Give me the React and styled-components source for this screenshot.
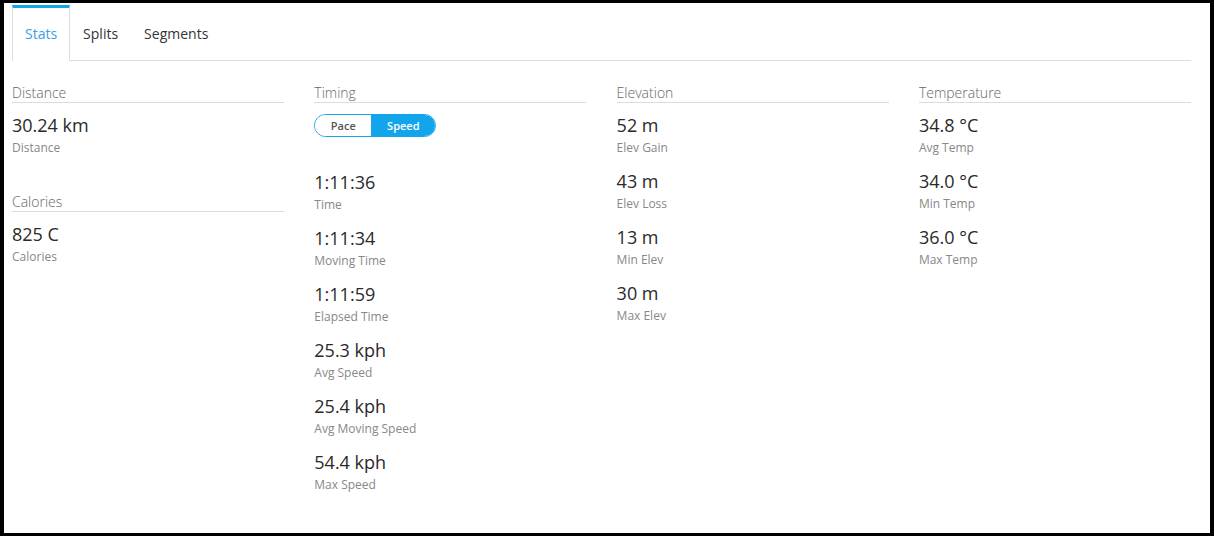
import React, { useState } from 'react'
import styled, { createGlobalStyle } from 'styled-components'

const GlobalStyle = createGlobalStyle`
  html, body {
    margin: 0;
    padding: 0;
    background: #000;
  }
  body {
    font-family: "Open Sans", "Noto Sans", sans-serif;
  }
`

const Frame = styled.div`
  width: 1206px;
  height: 530px;
  margin: 3px 0 0 4px;
  background: #fff;
  box-sizing: border-box;
  padding: 2px 19px 0 8px;
`

const TabBar = styled.div`
  display: flex;
  height: 55px;
  border-bottom: 1px solid #dedede;
  box-sizing: content-box;
`

const Tab = styled.div`
  display: flex;
  align-items: center;
  padding: 0 12px 2px;
  font-size: 14px;
  color: ${p => (p.$active ? '#3aa0e6' : '#333')};
  border-top: 3px solid ${p => (p.$active ? '#13a5ec' : 'transparent')};
  border-left: 1px solid ${p => (p.$active ? '#dedede' : 'transparent')};
  border-right: 1px solid ${p => (p.$active ? '#dedede' : 'transparent')};
  background: #fff;
  margin-bottom: ${p => (p.$active ? '-1px' : '0')};
  padding-bottom: ${p => (p.$active ? '3px' : '2px')};
  cursor: pointer;
`

const Columns = styled.div`
  display: grid;
  grid-template-columns: repeat(4, 272px);
  column-gap: 30.3px;
  padding-top: 22px;
`

const Column = styled.div`
  display: flex;
  flex-direction: column;
  gap: 22px;
`

const Section = styled.div`
  display: flex;
  flex-direction: column;
`

const SectionTitle = styled.div`
  font-size: 14px;
  line-height: 19px;
  color: #666;
  font-weight: 300;
  border-bottom: 1px solid #dcdcdc;
  margin-bottom: 11px;
`

const Stat = styled.div`
  margin-bottom: 14px;
`

const Value = styled.div`
  font-size: 18px;
  line-height: 22px;
  color: #2a2a2a;
`

const Label = styled.div`
  font-size: 12px;
  line-height: 16px;
  color: #888;
  margin-top: 4px;
`

const Toggle = styled.div`
  display: flex;
  width: 122px;
  height: 23px;
  box-sizing: border-box;
  border: 1px solid #13a5ec;
  border-radius: 12px;
  overflow: hidden;
  margin-bottom: 34px;
`

const ToggleButton = styled.div`
  flex: ${p => (p.$grow ? '0 0 64px' : '1')};
  display: flex;
  align-items: center;
  justify-content: center;
  font-size: 11px;
  font-weight: 600;
  color: ${p => (p.$on ? '#fff' : '#555')};
  background: ${p => (p.$on ? '#13a5ec' : '#fff')};
  cursor: pointer;
`

const columns = [
  [
    { title: 'Distance', stats: [['30.24 km', 'Distance']] },
    { title: 'Calories', stats: [['825 C', 'Calories']] },
  ],
  [
    {
      title: 'Timing',
      toggle: true,
      stats: [
        ['1:11:36', 'Time'],
        ['1:11:34', 'Moving Time'],
        ['1:11:59', 'Elapsed Time'],
        ['25.3 kph', 'Avg Speed'],
        ['25.4 kph', 'Avg Moving Speed'],
        ['54.4 kph', 'Max Speed'],
      ],
    },
  ],
  [
    {
      title: 'Elevation',
      stats: [
        ['52 m', 'Elev Gain'],
        ['43 m', 'Elev Loss'],
        ['13 m', 'Min Elev'],
        ['30 m', 'Max Elev'],
      ],
    },
  ],
  [
    {
      title: 'Temperature',
      stats: [
        ['34.8 °C', 'Avg Temp'],
        ['34.0 °C', 'Min Temp'],
        ['36.0 °C', 'Max Temp'],
      ],
    },
  ],
]

const App = () => {
  const [tab, setTab] = useState('Stats')
  const [mode, setMode] = useState('speed')

  return (
    <>
      <GlobalStyle />
      <Frame>
        <TabBar>
          {['Stats', 'Splits', 'Segments'].map(t => (
            <Tab key={t} $active={tab === t} onClick={() => setTab(t)}>
              {t}
            </Tab>
          ))}
        </TabBar>
        <Columns>
          {columns.map((sections, i) => (
            <Column key={i}>
              {sections.map(s => (
                <Section key={s.title}>
                  <SectionTitle>{s.title}</SectionTitle>
                  {s.toggle && (
                    <Toggle>
                      <ToggleButton $on={mode === 'pace'} onClick={() => setMode('pace')}>
                        Pace
                      </ToggleButton>
                      <ToggleButton $grow $on={mode === 'speed'} onClick={() => setMode('speed')}>
                        Speed
                      </ToggleButton>
                    </Toggle>
                  )}
                  {s.stats.map(([v, l]) => (
                    <Stat key={l}>
                      <Value>{v}</Value>
                      <Label>{l}</Label>
                    </Stat>
                  ))}
                </Section>
              ))}
            </Column>
          ))}
        </Columns>
      </Frame>
    </>
  )
}

export default App
